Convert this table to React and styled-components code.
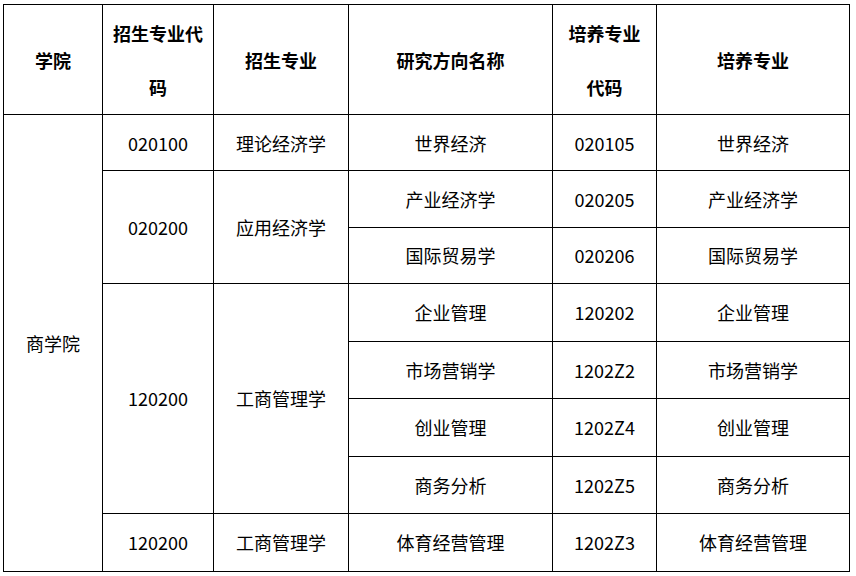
import React from "react";
import styled, { createGlobalStyle } from "styled-components";

const Global = createGlobalStyle`
  html, body { margin: 0; padding: 0; background: #fff; }
  body { font-family: "Noto Sans CJK SC", "Noto Sans", sans-serif; color: #000; }
`;

const Page = styled.div`
  padding: 4px 0 0 3px;
`;

const Table = styled.table`
  border-collapse: collapse;
  table-layout: fixed;
  width: 846px;
  border: 1px solid #000;
`;

const Row = styled.tr`
  height: ${(p) => p.$h}px;
`;

const Head = styled.th`
  border: 1px solid #000;
  padding: 0 8px;
  font-size: 18px;
  font-weight: 700;
  line-height: 54px;
  text-align: center;
  vertical-align: middle;
`;

const Cell = styled.td`
  border: 1px solid #000;
  padding: 0 6px;
  font-size: 18px;
  font-weight: 400;
  line-height: 24px;
  text-align: center;
  vertical-align: middle;
  white-space: nowrap;
`;

const cols = [99, 111, 135, 204, 104, 193];

const rows = [
  { h: 56, cells: [["商学院", 8], ["020100"], ["理论经济学"], ["世界经济"], ["020105"], ["世界经济"]] },
  { h: 56.5, cells: [["020200", 2], ["应用经济学", 2], ["产业经济学"], ["020205"], ["产业经济学"]] },
  { h: 56.5, cells: [["国际贸易学"], ["020206"], ["国际贸易学"]] },
  { h: 57.5, cells: [["120200", 4], ["工商管理学", 4], ["企业管理"], ["120202"], ["企业管理"]] },
  { h: 57.5, cells: [["市场营销学"], ["1202Z2"], ["市场营销学"]] },
  { h: 57.5, cells: [["创业管理"], ["1202Z4"], ["创业管理"]] },
  { h: 57, cells: [["商务分析"], ["1202Z5"], ["商务分析"]] },
  { h: 58, cells: [["120200"], ["工商管理学"], ["体育经营管理"], ["1202Z3"], ["体育经营管理"]] },
];

const headers = ["学院", "招生专业代码", "招生专业", "研究方向名称", "培养专业代码", "培养专业"];

export default function App() {
  return (
    <Page>
      <Global />
      <Table>
        <colgroup>
          {cols.map((w, i) => (
            <col key={i} style={{ width: w }} />
          ))}
        </colgroup>
        <thead>
          <Row $h={110}>
            {headers.map((h) => (
              <Head key={h}>{h}</Head>
            ))}
          </Row>
        </thead>
        <tbody>
          {rows.map((r, i) => (
            <Row key={i} $h={r.h}>
              {r.cells.map(([t, span], j) => (
                <Cell key={j} rowSpan={span || 1}>
                  {t}
                </Cell>
              ))}
            </Row>
          ))}
        </tbody>
      </Table>
    </Page>
  );
}
